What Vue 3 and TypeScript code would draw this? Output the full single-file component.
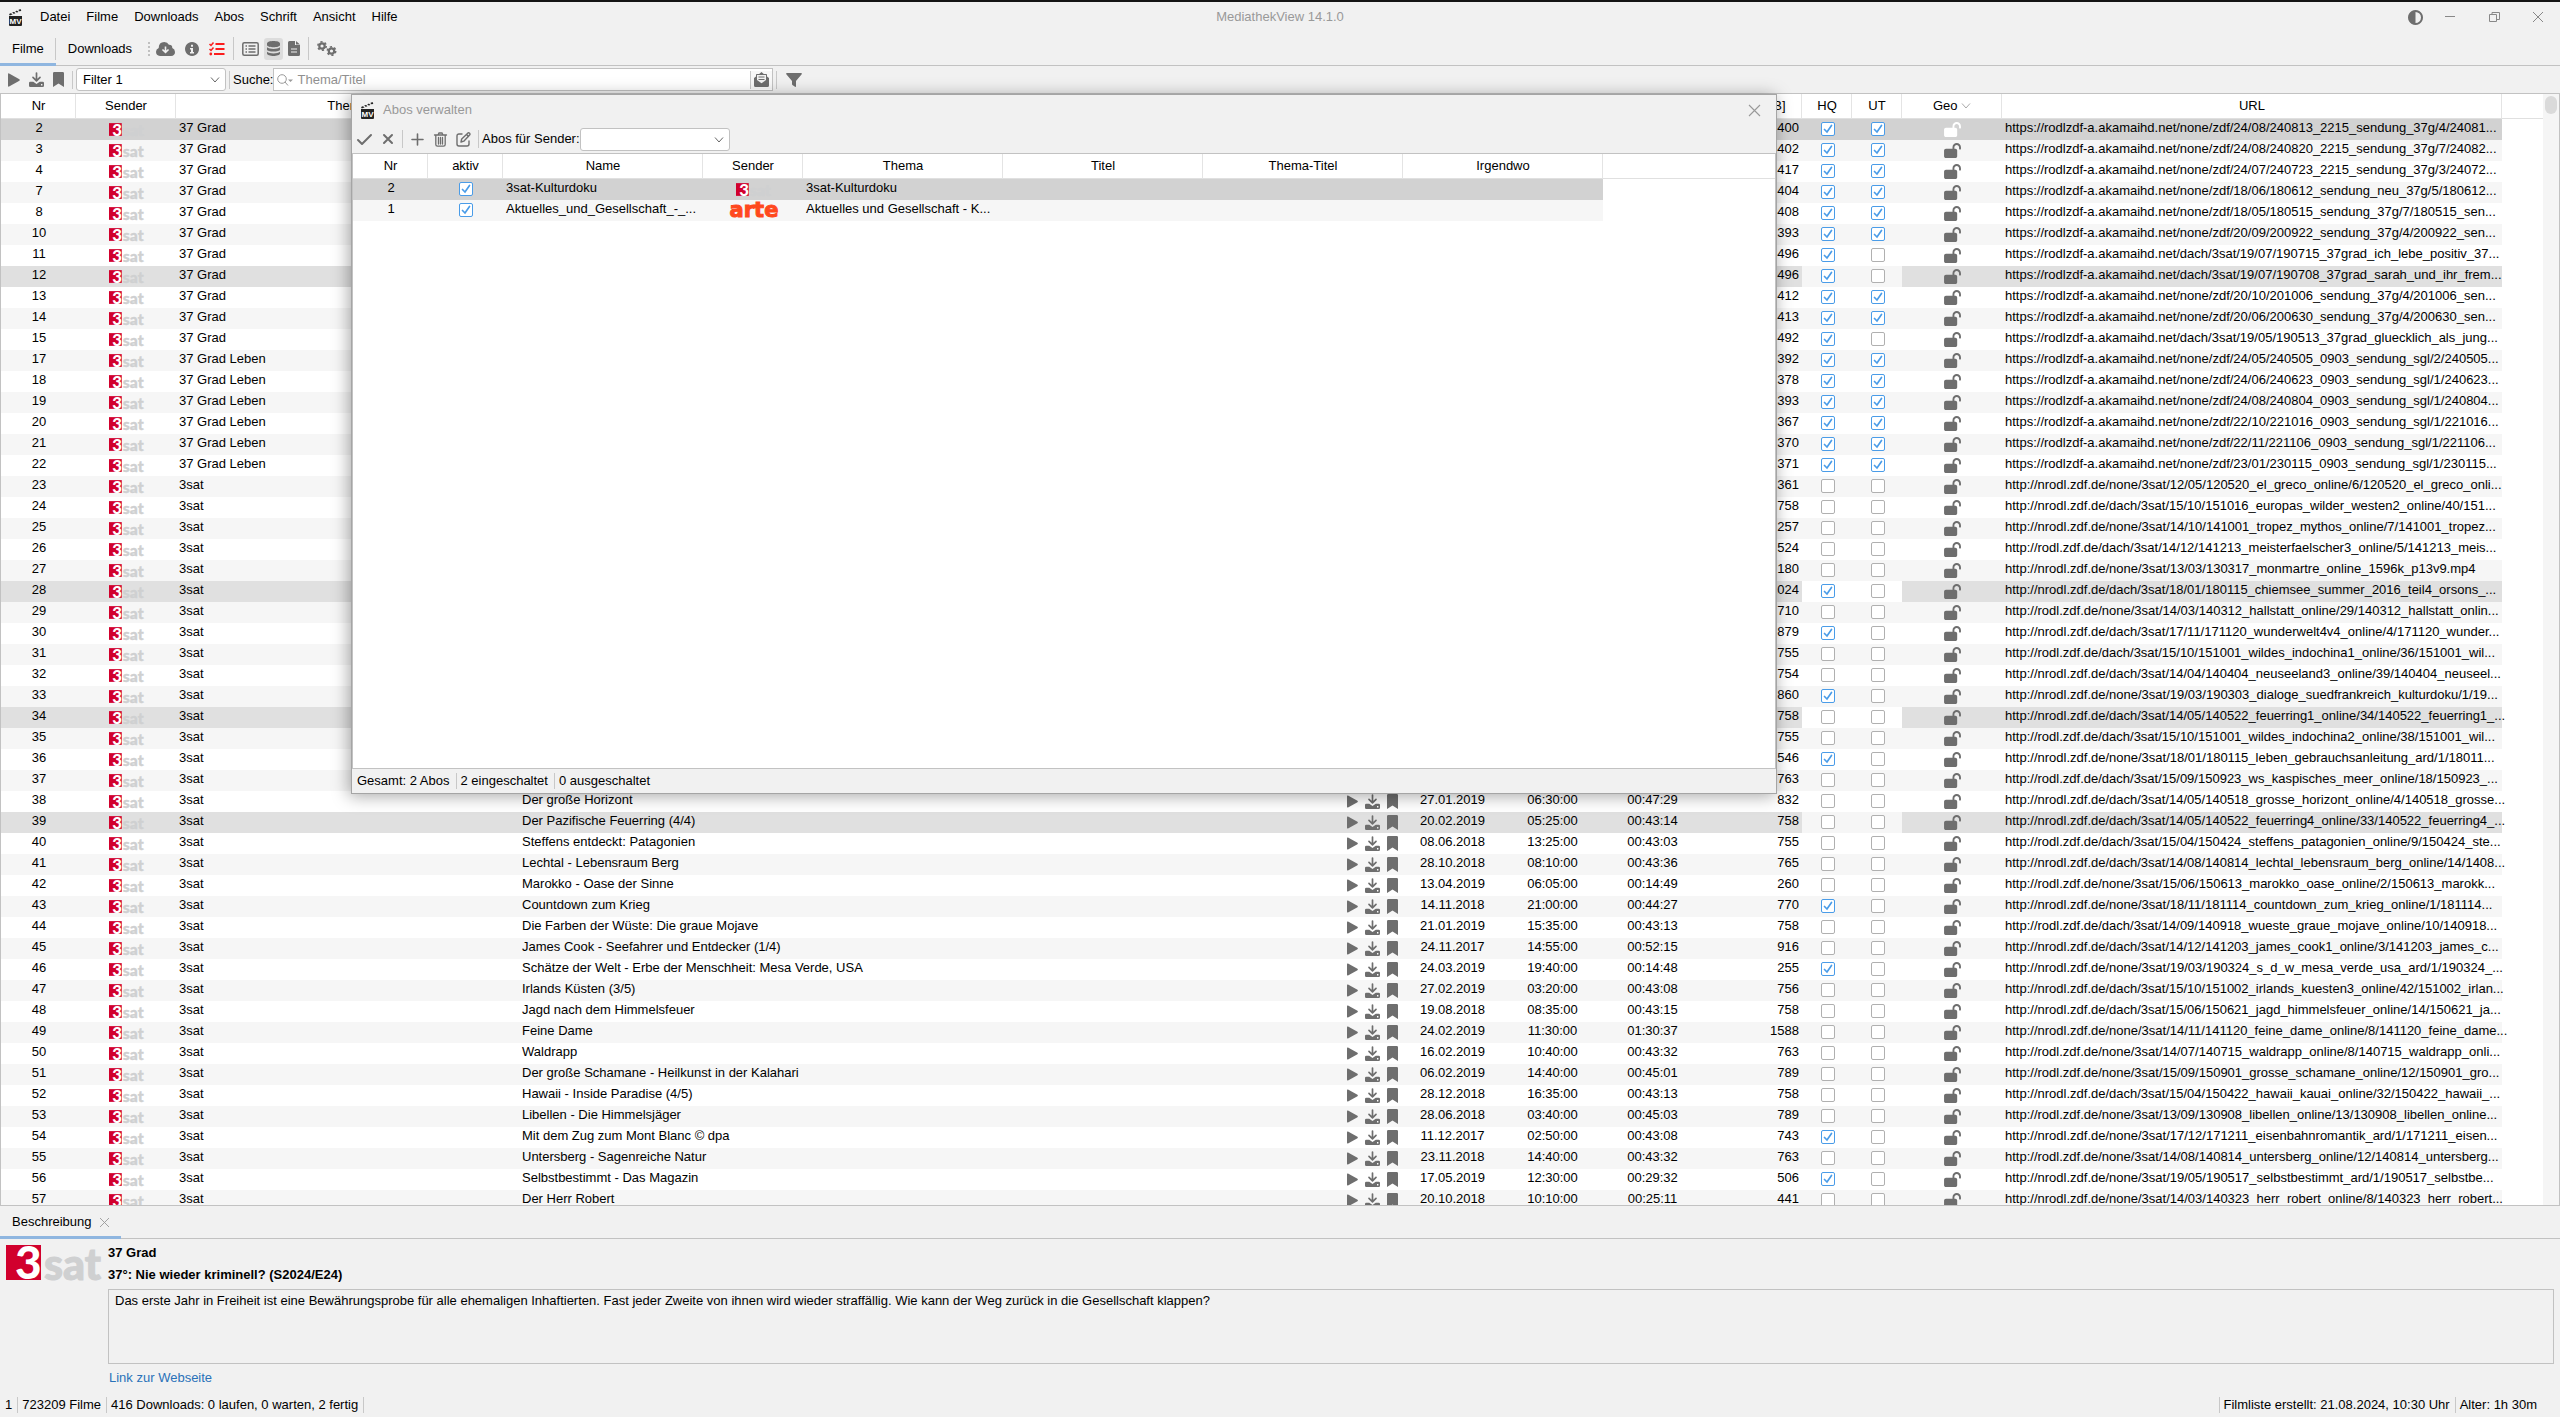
<script setup lang="ts">
import { h, ref } from 'vue'

interface Film {
  nr: number
  thema: string
  titel: string
  datum: string
  zeit: string
  dauer: string
  mb: string
  hq: boolean
  ut: boolean
  url: string
}

const shapes: Record<string, [number, number, string]> = {
  play: [12, 14, '<path d="M0 1.2Q0 0 1.1.5L11.4 6.2Q12.4 7 11.4 7.8L1.1 13.5Q0 14 0 12.8z"/>'],
  save: [15, 15, '<path d="M7.5 1v7.6M4 5.4l3.5 3.4L11 5.400" fill="none" stroke="currentColor" stroke-width="1.7" stroke-linecap="round" stroke-linejoin="round"/><path fill-rule="evenodd" d="M1.300 9.800h3L7.500 12l3.200-2.200h3q1.300 0 1.300 1.300v2.600q0 1.300-1.300 1.300H1.300Q0 15 0 13.700v-2.600q0-1.300 1.300-1.300zM12 12v1.400h1.400V12z"/>'],
  mark: [11, 15, '<path d="M0 1.300Q0 0 1.300 0H9.700Q11 0 11 1.300V15L5.500 11.600 0 15z"/>'],
  lock: [576, 512, '<path d="M352 192H384C419.300 192 448 220.700 448 256V448C448 483.300 419.300 512 384 512H64C28.650 512 0 483.300 0 448V256C0 220.700 28.650 192 64 192H288V144C288 64.470 352.500 0 432 0C511.500 0 576 64.470 576 144V192C576 209.700 561.700 224 544 224C526.300 224 512 209.700 512 192V144C512 99.820 476.200 64 432 64C387.800 64 352 99.820 352 144V192z"/>'],
  cloud: [19, 14, '<path fill-rule="evenodd" d="M4 14Q0 13.700 0 9.800 0 7 2.700 6 2.700 0 8.300 0q3.200 0 4.600 2.700Q16.300 2.500 16.300 6 19 7 19 10q0 3.700-4 4zM8.700 4.500v4L7 7 5.900 8.100 9.500 11.600 13.100 8.100 12 7l-1.700 1.500v-4z"/>'],
  info: [14, 14, '<path fill-rule="evenodd" d="M7 0a7 7 0 1 0 .01 0zM6 2.700h2v2H6zM5 6h3v4h1v1.500H5V10h1V7.500H5z"/>'],
  tasks: [16, 14, '<path d="M6.500 2h9M6.500 7h9M5 12h10.500" stroke="currentColor" stroke-width="2"/><path d="M.5 2 2 3.500 4.500.5M.5 7 2 8.500 4.500 5.500" fill="none" stroke="currentColor" stroke-width="1.500"/><circle cx="1.800" cy="12" r="1.400"/>'],
  list: [17, 14, '<rect x=".8" y=".8" width="15.400" height="12.400" rx="1.500" fill="none" stroke="currentColor" stroke-width="1.500"/><path d="M3.500 4h1.500M3.500 7h1.500M3.500 10h1.500M6.500 4h7M6.500 7h7M6.500 10h7" stroke="currentColor" stroke-width="1.300"/>'],
  base: [13, 15, '<path d="M0 2.500C0-.8 13-.8 13 2.500V4C13 7 0 7 0 4zM0 6.200c2.500 2.300 10.500 2.300 13 0V8.500C13 11.300 0 11.300 0 8.500zM0 10.700c2.500 2.300 10.500 2.300 13 0v1.800c0 3.300-13 3.300-13 0z"/>'],
  file: [12, 15, '<path fill-rule="evenodd" d="M1.500 0H7v4h5v9.500q0 1.500-1.500 1.500h-9Q0 15 0 13.500v-12Q0 0 1.500 0zM8 0l4 3.500H8zM3 7.500v1h6v-1zM3 10.500v1h6v-1z"/>'],
  gears: [20, 15, '<circle cx="5" cy="5" r="2.700" fill="none" stroke="currentColor" stroke-width="2.200"/><circle cx="5" cy="5" r="4.200" fill="none" stroke="currentColor" stroke-width="1.600" stroke-dasharray="2.200 2.200"/><circle cx="14.500" cy="10" r="2.700" fill="none" stroke="currentColor" stroke-width="2.200"/><circle cx="14.500" cy="10" r="4.200" fill="none" stroke="currentColor" stroke-width="1.600" stroke-dasharray="2.200 2.200"/>'],
  lens: [16, 12, '<g fill="none" stroke="currentColor"><circle cx="5" cy="5" r="4.300"/><path d="m8 8 3 3.500"/></g><path d="M11 5.500h5L13.500 8z"/>'],
  mail: [15, 15, '<path d="M0 6 2 4.500V2.800Q2 2 2.800 2h2.400L7.500 0l2.300 2h2.400q.8 0 .8.800v1.700L15 6v7.500q0 1.500-1.500 1.500h-12Q0 15 0 13.500z"/><path d="M3 3h9v5L7.500 11.300 3 8z" fill="#f1f1f1"/><path d="M4.500 5h6M4.500 7.500h6" stroke="currentColor"/>'],
  funnel: [16, 14, '<path d="M.8 0h14.400q1.200.2.500 1.300L10 8v5q0 1.300-1 .7L6.400 12Q6 11.600 6 11V8L.3 1.300Q-.4.2.8 0z"/>'],
  check: [15, 11, '<path d="M1 6l4 4L14 1" fill="none" stroke="currentColor" stroke-width="2" stroke-linecap="round" stroke-linejoin="round"/>'],
  cross: [10, 10, '<path d="M1 1l8 8M9 1 1 9" fill="none" stroke="currentColor" stroke-width="2" stroke-linecap="round"/>'],
  plus: [13, 13, '<path d="M6.500 1v11M1 6.500h11" stroke="currentColor" stroke-width="1.600" stroke-linecap="round"/>'],
  trash: [13, 15, '<path d="M.5 3h12M4 3l1-2h3l1 2M1.800 3v9.500q0 1.700 1.700 1.700h6q1.700 0 1.700-1.700V3M4.500 5.500V12M6.500 5.500V12M8.500 5.500V12" fill="none" stroke="currentColor" stroke-width="1.300" stroke-linecap="round"/>'],
  edit: [15, 15, '<path d="M6 2H3Q1 2 1 4v8q0 2 2 2h8q2 0 2-2V9M5 10l.7-3L12 .9q.8-.5 1.600.3.800.8.200 1.600L7.800 9.200zM10.500 2.500l2 2" fill="none" stroke="currentColor" stroke-width="1.400" stroke-linecap="round" stroke-linejoin="round"/>'],
  close: [10, 10, '<path d="M0 0l10 10M10 0 0 10" fill="none" stroke="currentColor"/>'],
  mini: [10, 10, '<path d="M0 4.500h10" stroke="currentColor"/>'],
  restore: [11, 10, '<path d="M.5 2.500h7v7h-7zM3 2.500v-2h7.500v7H7.500" fill="none" stroke="currentColor"/>'],
  theme: [15, 15, '<path fill-rule="evenodd" d="M7.500 0a7.500 7.500 0 1 0 .01 0zM7.500 2a5.500 5.500 0 0 1 0 11z"/>'],
  arrow: [10, 6, '<path d="M1 .5l4 4.500L9 .5" fill="none" stroke="currentColor"/>'],
  app: [13, 17, '<path d="M0 7h13v9q0 1-1 1H1q-1 0-1-1zM0 5 11.500 0l.8 1.800L.8 6.600z" fill="#222"/><path d="M2 3.200 4.500 5.500M5 2l2.500 2.300M8 .8 10.500 3" stroke="#f1f1f1" stroke-width="1.200"/><text x="6.500" y="15" font-size="8" font-weight="700" fill="#fff" text-anchor="middle" font-family="Liberation Sans, sans-serif">MV</text>'],
  dreisat: [96, 35, '<path d="M0 0h35v35H0z" fill="#d1002d"/><text x="9" y="34" font-size="46" font-weight="900" fill="#fff" font-family="Lato, sans-serif">3</text><text x="38" y="35" font-size="43" font-weight="900" fill="#cfd0d1" stroke="#cfd0d1" font-family="Lato, sans-serif">sat</text>'],
  arte: [52, 15, '<text x="26" y="14" font-size="21" font-weight="700" text-anchor="middle" fill="#ff481d" stroke="#ff481d" font-family="DejaVu Sans, sans-serif">arte</text>'],
}

const Icon = (props: { name: string; w?: number }) => {
  const [vw, vh, body] = shapes[props.name]
  const width = props.w ?? vw
  return h('svg', {
    viewBox: `0 0 ${vw} ${vh}`,
    width,
    height: Math.round((width * vh) / vw),
    fill: 'currentColor',
    'aria-hidden': 'true',
    innerHTML: body,
  })
}
Icon.props = ['name', 'w']

const akamai = 'https://rodlzdf-a.akamaihd.net/'
const source = `2|400|11|none/zdf/24/08/240813_2215_sendung_37g/4/24081...
3|402|11|none/zdf/24/08/240820_2215_sendung_37g/7/24082...
4|417|11|none/zdf/24/07/240723_2215_sendung_37g/3/24072...
7|404|11|none/zdf/18/06/180612_sendung_neu_37g/5/180612...
8|408|11|none/zdf/18/05/180515_sendung_37g/7/180515_sen...
10|393|11|none/zdf/20/09/200922_sendung_37g/4/200922_sen...
11|496|10|dach/3sat/19/07/190715_37grad_ich_lebe_positiv_37...
12|496|10|dach/3sat/19/07/190708_37grad_sarah_und_ihr_frem...
13|412|11|none/zdf/20/10/201006_sendung_37g/4/201006_sen...
14|413|11|none/zdf/20/06/200630_sendung_37g/4/200630_sen...
15|492|10|dach/3sat/19/05/190513_37grad_gluecklich_als_jung...
17|392|11|none/zdf/24/05/240505_0903_sendung_sgl/2/240505...
18|378|11|none/zdf/24/06/240623_0903_sendung_sgl/1/240623...
19|393|11|none/zdf/24/08/240804_0903_sendung_sgl/1/240804...
20|367|11|none/zdf/22/10/221016_0903_sendung_sgl/1/221016...
21|370|11|none/zdf/22/11/221106_0903_sendung_sgl/1/221106...
22|371|11|none/zdf/23/01/230115_0903_sendung_sgl/1/230115...
23|361|00|http://nrodl.zdf.de/none/3sat/12/05/120520_el_greco_online/6/120520_el_greco_onli...
24|758|00|http://nrodl.zdf.de/dach/3sat/15/10/151016_europas_wilder_westen2_online/40/151...
25|257|00|http://nrodl.zdf.de/none/3sat/14/10/141001_tropez_mythos_online/7/141001_tropez...
26|524|00|http://rodl.zdf.de/dach/3sat/14/12/141213_meisterfaelscher3_online/5/141213_meis...
27|180|00|http://nrodl.zdf.de/none/3sat/13/03/130317_monmartre_online_1596k_p13v9.mp4
28|1024|10|http://nrodl.zdf.de/dach/3sat/18/01/180115_chiemsee_summer_2016_teil4_orsons_...
29|710|00|http://rodl.zdf.de/none/3sat/14/03/140312_hallstatt_online/29/140312_hallstatt_onlin...
30|879|10|http://nrodl.zdf.de/dach/3sat/17/11/171120_wunderwelt4v4_online/4/171120_wunder...
31|755|00|http://rodl.zdf.de/dach/3sat/15/10/151001_wildes_indochina1_online/36/151001_wil...
32|754|00|http://nrodl.zdf.de/dach/3sat/14/04/140404_neuseeland3_online/39/140404_neuseel...
33|860|10|http://nrodl.zdf.de/none/3sat/19/03/190303_dialoge_suedfrankreich_kulturdoku/1/19...
34|758|00|http://nrodl.zdf.de/dach/3sat/14/05/140522_feuerring1_online/34/140522_feuerring1_...
35|755|00|http://rodl.zdf.de/dach/3sat/15/10/151001_wildes_indochina2_online/38/151001_wil...
36|1546|10|http://nrodl.zdf.de/none/3sat/18/01/180115_leben_gebrauchsanleitung_ard/1/18011...
37|763|00|http://rodl.zdf.de/dach/3sat/15/09/150923_ws_kaspisches_meer_online/18/150923_...
38|832|00|http://nrodl.zdf.de/dach/3sat/14/05/140518_grosse_horizont_online/4/140518_grosse...|Der große Horizont|27.01.2019|06:30:00|00:47:29
39|758|00|http://nrodl.zdf.de/dach/3sat/14/05/140522_feuerring4_online/33/140522_feuerring4_...|Der Pazifische Feuerring (4/4)|20.02.2019|05:25:00|00:43:14
40|755|00|http://rodl.zdf.de/dach/3sat/15/04/150424_steffens_patagonien_online/9/150424_ste...|Steffens entdeckt: Patagonien|08.06.2018|13:25:00|00:43:03
41|765|00|http://nrodl.zdf.de/dach/3sat/14/08/140814_lechtal_lebensraum_berg_online/14/1408...|Lechtal - Lebensraum Berg|28.10.2018|08:10:00|00:43:36
42|260|00|http://rodl.zdf.de/none/3sat/15/06/150613_marokko_oase_online/2/150613_marokk...|Marokko - Oase der Sinne|13.04.2019|06:05:00|00:14:49
43|770|10|http://nrodl.zdf.de/none/3sat/18/11/181114_countdown_zum_krieg_online/1/181114...|Countdown zum Krieg|14.11.2018|21:00:00|00:44:27
44|758|00|http://rodl.zdf.de/dach/3sat/14/09/140918_wueste_graue_mojave_online/10/140918...|Die Farben der Wüste: Die graue Mojave|21.01.2019|15:35:00|00:43:13
45|916|00|http://nrodl.zdf.de/dach/3sat/14/12/141203_james_cook1_online/3/141203_james_c...|James Cook - Seefahrer und Entdecker (1/4)|24.11.2017|14:55:00|00:52:15
46|255|10|http://nrodl.zdf.de/none/3sat/19/03/190324_s_d_w_mesa_verde_usa_ard/1/190324_...|Schätze der Welt - Erbe der Menschheit: Mesa Verde, USA|24.03.2019|19:40:00|00:14:48
47|756|00|http://nrodl.zdf.de/dach/3sat/15/10/151002_irlands_kuesten3_online/42/151002_irlan...|Irlands Küsten (3/5)|27.02.2019|03:20:00|00:43:08
48|758|00|http://nrodl.zdf.de/dach/3sat/15/06/150621_jagd_himmelsfeuer_online/14/150621_ja...|Jagd nach dem Himmelsfeuer|19.08.2018|08:35:00|00:43:15
49|1588|00|http://nrodl.zdf.de/none/3sat/14/11/141120_feine_dame_online/8/141120_feine_dame...|Feine Dame|24.02.2019|11:30:00|01:30:37
50|763|00|http://rodl.zdf.de/none/3sat/14/07/140715_waldrapp_online/8/140715_waldrapp_onli...|Waldrapp|16.02.2019|10:40:00|00:43:32
51|789|00|http://rodl.zdf.de/none/3sat/15/09/150901_grosse_schamane_online/12/150901_gro...|Der große Schamane - Heilkunst in der Kalahari|06.02.2019|14:40:00|00:45:01
52|758|00|http://nrodl.zdf.de/dach/3sat/15/04/150422_hawaii_kauai_online/32/150422_hawaii_...|Hawaii - Inside Paradise (4/5)|28.12.2018|16:35:00|00:43:13
53|789|00|http://rodl.zdf.de/none/3sat/13/09/130908_libellen_online/13/130908_libellen_online...|Libellen - Die Himmelsjäger|28.06.2018|03:40:00|00:45:03
54|743|10|http://nrodl.zdf.de/none/3sat/17/12/171211_eisenbahnromantik_ard/1/171211_eisen...|Mit dem Zug zum Mont Blanc © dpa|11.12.2017|02:50:00|00:43:08
55|763|00|http://rodl.zdf.de/none/3sat/14/08/140814_untersberg_online/12/140814_untersberg...|Untersberg - Sagenreiche Natur|23.11.2018|14:40:00|00:43:32
56|506|10|http://nrodl.zdf.de/none/3sat/19/05/190517_selbstbestimmt_ard/1/190517_selbstbe...|Selbstbestimmt - Das Magazin|17.05.2019|12:30:00|00:29:32
57|441|00|http://nrodl.zdf.de/none/3sat/14/03/140323_herr_robert_online/8/140323_herr_robert...|Der Herr Robert|20.10.2018|10:10:00|00:25:11`

const films: Film[] = source.split('\n').map((line) => {
  const [n, mb, flags, path, titel = '', datum = '', zeit = '', dauer = ''] = line.split('|')
  const nr = Number(n)
  return {
    nr, mb, titel, datum, zeit, dauer,
    thema: nr < 17 ? '37 Grad' : nr < 23 ? '37 Grad Leben' : '3sat',
    hq: flags[0] === '1',
    ut: flags[1] === '1',
    url: path.startsWith('http') ? path : akamai + path,
  }
})

const seen = [12, 28, 34, 39]
const selected = ref(2)
const menus = ['Datei', 'Filme', 'Downloads', 'Abos', 'Schrift', 'Ansicht', 'Hilfe']
const abos = [
  { nr: 2, name: '3sat-Kulturdoku', sender: 'dreisat', thema: '3sat-Kulturdoku' },
  { nr: 1, name: 'Aktuelles_und_Gesellschaft_-_...', sender: 'arte', thema: 'Aktuelles und Gesellschaft - K...' },
]
const beschreibung =
  'Das erste Jahr in Freiheit ist eine Bewährungsprobe für alle ehemaligen Inhaftierten. Fast jeder Zweite von ihnen wird wieder straffällig. Wie kann der Weg zurück in die Gesellschaft klappen?'
</script>

<template>
  <div class="app">
    <header class="titlebar">
      <nav class="menu">
        <Icon name="app" class="logo" />
        <button v-for="m in menus" :key="m" type="button">{{ m }}</button>
      </nav>
      <h1>MediathekView 14.1.0</h1>
      <div class="winbtns">
        <button type="button" class="theme" aria-label="Farbschema"><Icon name="theme" /></button>
        <button type="button" aria-label="Minimieren"><Icon name="mini" /></button>
        <button type="button" aria-label="Wiederherstellen"><Icon name="restore" /></button>
        <button type="button" aria-label="Schließen"><Icon name="close" /></button>
      </div>
    </header>

    <div class="toolbar">
      <button type="button" class="tab active">Filme</button>
      <button type="button" class="tab">Downloads</button>
      <span class="grip"></span>
      <button type="button" class="tool" aria-label="Filmliste laden"><Icon name="cloud" /></button>
      <button type="button" class="tool" aria-label="Info"><Icon name="info" /></button>
      <button type="button" class="tool red" aria-label="Aufgaben"><Icon name="tasks" /></button>
      <span class="sep tall"></span>
      <button type="button" class="tool" aria-label="Liste"><Icon name="list" /></button>
      <button type="button" class="tool on" aria-label="Datenbank"><Icon name="base" /></button>
      <button type="button" class="tool" aria-label="Datei"><Icon name="file" /></button>
      <span class="sep tall"></span>
      <button type="button" class="tool" aria-label="Einstellungen"><Icon name="gears" /></button>
    </div>

    <div class="filterbar">
      <button type="button" class="tool" aria-label="Abspielen"><Icon name="play" /></button>
      <button type="button" class="tool" aria-label="Speichern"><Icon name="save" /></button>
      <button type="button" class="tool" aria-label="Merken"><Icon name="mark" /></button>
      <span class="sep"></span>
      <span class="combo">
        <select aria-label="Filter"><option>Filter 1</option></select>
        <Icon name="arrow" />
      </span>
      <span class="sep"></span>
      <label for="suche">Suche:</label>
      <span class="search">
        <Icon name="lens" />
        <input id="suche" type="text" placeholder="Thema/Titel" />
        <button type="button" class="tool" aria-label="Suchoptionen"><Icon name="mail" /></button>
      </span>
      <span class="sep"></span>
      <button type="button" class="tool funnel" aria-label="Filter anzeigen"><Icon name="funnel" /></button>
    </div>

    <main class="films">
      <div class="pane">
        <table>
          <colgroup>
            <col class="w75" /><col class="w100" /><col class="w343" /><col />
            <col class="w20" /><col class="w20" /><col class="w20" />
            <col class="w100" /><col class="w100" /><col class="w100" /><col class="w100" />
            <col class="w50" /><col class="w50" /><col class="w100" /><col class="w500" /><col class="w41" />
          </colgroup>
          <thead>
            <tr>
              <th>Nr</th><th>Sender</th><th>Thema</th><th>Titel</th><th></th><th></th><th></th>
              <th>Datum</th><th>Zeit</th><th>Dauer</th><th>Größe [MB]</th><th>HQ</th><th>UT</th>
              <th class="sorted">Geo <Icon name="arrow" /></th><th>URL</th><th class="rest"></th>
            </tr>
          </thead>
          <tbody>
            <tr v-for="f in films" :key="f.nr" :class="{ sel: f.nr === selected, seen: seen.includes(f.nr) }" @click="selected = f.nr">
              <td class="c">{{ f.nr }}</td>
              <td class="c"><Icon name="dreisat" :w="35" /></td>
              <td>{{ f.thema }}</td>
              <td>{{ f.titel }}</td>
              <td class="c"><button type="button" aria-label="Abspielen"><Icon name="play" :w="11" /></button></td>
              <td class="c"><button type="button" aria-label="Speichern"><Icon name="save" /></button></td>
              <td class="c"><button type="button" aria-label="Merken"><Icon name="mark" /></button></td>
              <td class="c">{{ f.datum }}</td>
              <td class="c">{{ f.zeit }}</td>
              <td class="c">{{ f.dauer }}</td>
              <td class="r">{{ f.mb }}</td>
              <td class="c flag"><input type="checkbox" aria-label="HQ" :checked="f.hq" /></td>
              <td class="c flag"><input type="checkbox" aria-label="UT" :checked="f.ut" /></td>
              <td class="c lock"><Icon name="lock" :w="17" /></td>
              <td class="url">{{ f.url }}</td>
              <td class="rest flag"></td>
            </tr>
          </tbody>
        </table>
      </div>
      <div class="scroll"><span></span></div>
    </main>

    <section class="details">
      <div class="tabs">
        <button type="button" class="tab active">Beschreibung <Icon name="close" :w="9" /></button>
      </div>
      <div class="info">
        <Icon name="dreisat" :w="96" />
        <div class="text">
          <strong>37 Grad</strong>
          <strong>37°: Nie wieder kriminell? (S2024/E24)</strong>
          <textarea readonly aria-label="Beschreibung" :value="beschreibung"></textarea>
          <a href="#">Link zur Webseite</a>
        </div>
      </div>
    </section>

    <footer class="status">
      <span>1</span><span>723209 Filme</span><span>416 Downloads: 0 laufen, 0 warten, 2 fertig</span>
      <span class="fill"></span><span>Filmliste erstellt: 21.08.2024, 10:30 Uhr</span><span>Alter: 1h 30m</span>
    </footer>

    <section class="dialog" role="dialog" aria-labelledby="dlg">
      <header>
        <Icon name="app" />
        <h2 id="dlg">Abos verwalten</h2>
        <button type="button" aria-label="Dialog schließen"><Icon name="close" :w="11" /></button>
      </header>
      <div class="dtools">
        <button type="button" class="tool" aria-label="Einschalten"><Icon name="check" /></button>
        <button type="button" class="tool" aria-label="Ausschalten"><Icon name="cross" /></button>
        <span class="sep"></span>
        <button type="button" class="tool" aria-label="Hinzufügen"><Icon name="plus" /></button>
        <button type="button" class="tool" aria-label="Löschen"><Icon name="trash" /></button>
        <button type="button" class="tool" aria-label="Bearbeiten"><Icon name="edit" /></button>
        <span class="sep"></span>
        <label for="abosender">Abos für Sender:</label>
        <span class="combo">
          <select id="abosender"><option></option></select>
          <Icon name="arrow" />
        </span>
      </div>
      <div class="dpane">
        <table>
          <colgroup>
            <col class="w75" /><col class="w75" /><col class="w200" /><col class="w100" />
            <col class="w200" /><col class="w200" /><col class="w200" /><col class="w200" /><col />
          </colgroup>
          <thead>
            <tr>
              <th>Nr</th><th>aktiv</th><th>Name</th><th>Sender</th><th>Thema</th><th>Titel</th>
              <th>Thema-Titel</th><th>Irgendwo</th><th class="rest"></th>
            </tr>
          </thead>
          <tbody>
            <tr v-for="a in abos" :key="a.nr" :class="{ sel: a.nr === 2 }">
              <td class="c">{{ a.nr }}</td>
              <td class="c"><input type="checkbox" aria-label="aktiv" checked /></td>
              <td>{{ a.name }}</td>
              <td class="c"><Icon :name="a.sender" :w="a.sender === 'arte' ? 52 : 35" /></td>
              <td>{{ a.thema }}</td>
              <td></td><td></td><td></td><td class="rest"></td>
            </tr>
          </tbody>
        </table>
      </div>
      <footer class="status">
        <span>Gesamt: 2 Abos</span><span>2 eingeschaltet</span><span>0 ausgeschaltet</span>
      </footer>
    </section>
  </div>
</template>

<style>
body {
  margin: 0;
  background: #f1f1f1;
}
</style>

<style scoped>
* {
  box-sizing: border-box;
}
.app {
  position: relative;
  display: flex;
  flex-direction: column;
  height: 100vh;
  overflow: hidden;
  border-top: 2px solid #151515;
  background: #f1f1f1;
  color: #000;
  font: 13px/20px 'Liberation Sans', Arial, sans-serif;
}
svg {
  flex: none;
  display: block;
  overflow: visible;
}
button {
  border: 0;
  padding: 0;
  background: none;
  color: inherit;
  font: inherit;
}
h1,
h2 {
  margin: 0;
  color: #999;
  font-size: 13px;
  font-weight: 400;
}
.titlebar {
  display: grid;
  grid-template-columns: 1fr auto 1fr;
  align-items: center;
  height: 30px;
}
.menu {
  display: flex;
  align-items: center;
}
.logo {
  margin: 0 10px 0 9px;
}
.menu button {
  padding: 0 8px;
}
.winbtns {
  display: flex;
  justify-content: flex-end;
  color: #888;
}
.winbtns button {
  display: flex;
  justify-content: center;
  align-items: center;
  width: 44px;
}
.winbtns .theme {
  width: 16px;
  margin-right: 5px;
  color: #6e6e6e;
}
.toolbar {
  display: flex;
  align-items: center;
  height: 34px;
  border-bottom: 1px solid #c2c2c2;
}
.toolbar .tab {
  position: relative;
  align-self: stretch;
  padding: 0 12px;
}
.toolbar .active::before {
  content: '';
  position: absolute;
  right: 0;
  top: 6px;
  height: 22px;
  border-right: 1px solid #c8c8c8;
}
.toolbar .active::after {
  content: '';
  position: absolute;
  left: 0;
  right: 0;
  bottom: -1px;
  height: 3px;
  background: #8fb6e0;
}
.grip {
  height: 14px;
  margin: 0 1px 0 4px;
  border-left: 2px dotted #c0c0c0;
}
.tool {
  display: flex;
  align-items: center;
  justify-content: center;
  height: 22px;
  color: #6e6e6e;
}
.toolbar .tool {
  padding: 0 4px;
  margin: 0 1px;
}
.toolbar .on {
  margin: 0;
  padding: 0 3px;
  border-radius: 3px;
  background: #dcdcdc;
}
.toolbar .red {
  color: #fb1d1d;
}
.sep {
  width: 1px;
  height: 18px;
  margin: 0 3px;
  background: #c8c8c8;
}
.tall {
  height: 23px;
}
.filterbar {
  display: flex;
  align-items: center;
  height: 27px;
}
.filterbar .tool {
  width: 22px;
}
.filterbar > .tool:first-child {
  margin-left: 3px;
}
.combo {
  position: relative;
  width: 150px;
  height: 23px;
}
.combo select {
  width: 100%;
  height: 100%;
  padding: 0 6px;
  border: 1px solid #c2c2c2;
  border-radius: 3px;
  appearance: none;
  background: #fff;
  color: #000;
  font: inherit;
}
.combo svg {
  position: absolute;
  right: 6px;
  top: 9px;
  color: #666;
}
.search {
  display: flex;
  align-items: center;
  width: 500px;
  height: 23px;
  padding-left: 3px;
  border: 1px solid #c2c2c2;
  background: #fff;
  color: #9a9a9a;
}
.search input {
  flex: 1;
  min-width: 0;
  padding: 0 4px;
  border: 0;
  background: none;
  font: inherit;
}
.search input::placeholder {
  color: #909090;
}
.search .tool {
  height: 18px;
  border-left: 1px solid #c8c8c8;
  background: #f8f8f8;
}
.filterbar .funnel {
  margin-left: 3px;
}
.films {
  display: flex;
  flex: 1;
  min-height: 0;
  border: 1px solid #c2c2c2;
  background: #fff;
}
.pane {
  flex: 1;
  min-width: 0;
  overflow: hidden;
}
table {
  width: 100%;
  table-layout: fixed;
  border-collapse: separate;
  border-spacing: 0;
}
.w20 { width: 20px; }
.w41 { width: 41px; }
.w50 { width: 50px; }
.w75 { width: 75px; }
.w100 { width: 100px; }
.w200 { width: 200px; }
.w343 { width: 343px; }
.w500 { width: 500px; }
th {
  height: 25px;
  padding: 0 0 0 1px;
  border-right: 1px solid #e4e4e4;
  border-bottom: 1px solid #e0e0e0;
  font-weight: 400;
  white-space: nowrap;
}
th.rest {
  border-right: 0;
}
.sorted svg {
  display: inline-block;
  vertical-align: 1px;
  color: #aaa;
}
td {
  height: 21px;
  padding: 0 3px 3px;
  overflow: hidden;
  line-height: 18px;
  white-space: nowrap;
}
.c {
  padding: 0 0 3px 1px;
  text-align: center;
}
.r {
  text-align: right;
}
.url {
  overflow: visible;
}
td svg {
  margin: 3px auto 0;
}
td button {
  display: block;
  width: 100%;
  color: #6e6e6e;
}
.lock {
  color: #6e6e6e;
}
tbody tr:nth-child(even) td:not(.rest) {
  background: #f6f6f6;
}
tbody tr.seen td:not(.flag) {
  background: #e0e0e0;
}
tbody tr.sel td:not(.rest) {
  background: #d2d2d2;
}
.sel .lock {
  color: #fff;
}
td input {
  display: block;
  width: 14px;
  height: 14px;
  margin: 2px auto 0;
  border: 1px solid #b0b0b0;
  border-radius: 2px;
  appearance: none;
  background: #fff;
}
td input:checked {
  border-color: #4a9ce8;
  background: #fff url("data:image/svg+xml,%3Csvg xmlns='http://www.w3.org/2000/svg' viewBox='0 0 12 12'%3E%3Cpath d='M2.500 6.500 5 9 9.500 2.500' fill='none' stroke='%234a9ce8' stroke-width='1.700' stroke-linecap='round'/%3E%3C/svg%3E");
}
.scroll {
  width: 16px;
  padding: 2px;
  background: #f5f5f5;
}
.scroll span {
  display: block;
  height: 18px;
  border-radius: 6px;
  background: #dadada;
}
.tabs {
  display: flex;
  height: 33px;
  border-bottom: 1px solid #c2c2c2;
}
.tabs .tab {
  position: relative;
  display: flex;
  align-items: center;
  gap: 8px;
  padding: 0 12px;
}
.tabs .tab::after {
  content: '';
  position: absolute;
  left: 0;
  right: 0;
  bottom: -1px;
  height: 3px;
  background: #8fb6e0;
}
.tabs svg {
  color: #999;
}
.info {
  display: flex;
  gap: 6px;
  padding: 6px 6px 5px;
}
.text {
  display: flex;
  flex: 1;
  flex-direction: column;
  align-items: flex-start;
}
strong {
  line-height: 22px;
  margin-top: -3px;
  padding-bottom: 3px;
}
textarea {
  align-self: stretch;
  height: 75px;
  padding: 1px 6px;
  border: 1px solid #c2c2c2;
  background: none;
  color: inherit;
  font: inherit;
  resize: none;
}
a {
  margin: 4px 0 0 1px;
  color: #2a72b9;
  text-decoration: none;
}
.status {
  display: flex;
  align-items: center;
  height: 24px;
  padding-left: 5px;
}
.status span {
  height: 16px;
  margin-right: 4px;
  padding-right: 5px;
  border-right: 1px solid #c8c8c8;
  line-height: 16px;
}
.status .fill {
  flex: 1;
}
.status span:last-child {
  border: 0;
}
.app > .status {
  padding: 0 14px 0 5px;
}
.dialog .status span {
  padding-right: 6px;
}
.dialog {
  position: absolute;
  left: 351px;
  right: 783px;
  top: 92px;
  display: flex;
  flex-direction: column;
  height: 700px;
  border: 1px solid #a5a5a5;
  background: #f1f1f1;
  box-shadow: -2px 2px 16px rgba(0, 0, 0, 0.35);
}
.dialog header {
  display: flex;
  align-items: center;
  gap: 9px;
  height: 30px;
  padding: 0 16px 0 9px;
}
.dialog header button {
  margin-left: auto;
  color: #999;
}
.dtools {
  display: flex;
  align-items: center;
  height: 28px;
  padding: 0 2px 0 1px;
}
.dtools .tool {
  width: 23px;
}
.dpane {
  flex: 1;
  border: 1px solid #c2c2c2;
  background: #fff;
}
</style>
